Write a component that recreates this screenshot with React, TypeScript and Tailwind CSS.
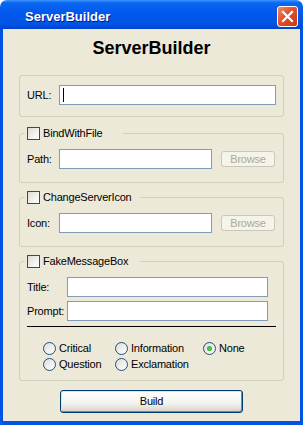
import { ReactNode } from 'react';

function CheckBox() {
  return (
    <span className="w-[13px] h-[13px] shrink-0 border border-[#1c5180] bg-[linear-gradient(135deg,#dcdcd7,#ffffff)]" />
  );
}

function Radio({ label, checked }: { label: string; checked?: boolean }) {
  return (
    <div className="flex items-center h-[13px]">
      <span className="w-[13px] h-[13px] shrink-0 rounded-full border border-[#1c5180] bg-[linear-gradient(135deg,#dcdcd7,#ffffff)] flex items-center justify-center">
        {checked && <span className="w-[5px] h-[5px] rounded-full bg-[radial-gradient(circle,#55d655,#21a121)]" />}
      </span>
      <span className="ml-[3px] leading-[13px]">{label}</span>
    </div>
  );
}

function TextBox({ width, caret }: { width: string; caret?: boolean }) {
  return (
    <div className={`${width} h-[20px] border border-[#7f9db9] bg-white flex items-center`}>
      {caret && <span className="ml-[3px] w-px h-[14px] bg-black" />}
    </div>
  );
}

function BrowseButton() {
  return (
    <div className="ml-[9px] w-[54px] h-[16px] rounded-[3px] border border-[#c9c7ba] bg-[#f5f4ea] text-[#aca899] flex items-center justify-center leading-none">
      Browse
    </div>
  );
}

function Group({ title, legendWidth, children }: { title: string; legendWidth: string; children: ReactNode }) {
  return (
    <fieldset className="mx-4 border border-[#d0d0bf] rounded-[3px] pt-[9px] pb-[13px]">
      <legend className={`ml-[5px] pl-[2px] ${legendWidth} h-[13px] flex items-center`}>
        <CheckBox />
        <span className="ml-[3px] leading-[13px]">{title}</span>
      </legend>
      {children}
    </fieldset>
  );
}

export default function App() {
  return (
    <div className="w-[303px] h-[425px] flex flex-col font-['Liberation_Sans',Arial,sans-serif] text-[11px] tracking-[-0.2px] text-black bg-white">
      {/* Title bar */}
      <div className="h-[29px] shrink-0 rounded-t-[7px] bg-[linear-gradient(to_bottom,#3d95ff_0%,#0a66f0_10%,#0058ee_45%,#0054e3_85%,#0042cf_100%)] flex items-center pt-[3px] pl-[25px] pr-[5px]">
        <span className="flex-1 text-white font-bold text-[13px] leading-[15px] tracking-normal [text-shadow:1px_1px_0_#0a1883]">ServerBuilder</span>
        <div className="w-[21px] h-[21px] rounded-[3px] border border-white bg-[linear-gradient(135deg,#f08a6a,#e0502c_45%,#c73a12)] flex items-center justify-center">
          <svg width="19" height="19" viewBox="0 0 19 19">
            <path d="M5 5 L14 14 M14 5 L5 14" stroke="#ffffff" strokeWidth="2.2" strokeLinecap="square" />
          </svg>
        </div>
      </div>

      {/* Client area */}
      <div className="flex-1 flex flex-col bg-[#ece9d8] border-x-[3px] border-b-[4px] border-[#0054e3]">
        <h1 className="pt-[9px] text-center font-bold text-[18px] leading-[20px] tracking-normal">ServerBuilder</h1>

        {/* URL */}
        <div className="mx-4 mt-[17px] border border-[#d0d0bf] rounded-[3px] pt-[9px] pb-[11px]">
          <div className="flex items-center pl-[7px]">
            <span className="w-[32px]">URL:</span>
            <TextBox width="w-[217px]" caret />
          </div>
        </div>

        <div className="mt-[10px]">
          <Group title="BindWithFile" legendWidth="w-[98px]">
            <div className="flex items-center pl-[7px]">
              <span className="w-[32px]">Path:</span>
              <TextBox width="w-[153px]" />
              <BrowseButton />
            </div>
          </Group>
        </div>

        <div className="mt-[8px]">
          <Group title="ChangeServerIcon" legendWidth="w-[115px]">
            <div className="flex items-center pl-[7px]">
              <span className="w-[32px]">Icon:</span>
              <TextBox width="w-[153px]" />
              <BrowseButton />
            </div>
          </Group>
        </div>

        <div className="mt-[8px]">
          <fieldset className="mx-4 border border-[#d0d0bf] rounded-[3px] pt-[9px] pb-[9px]">
            <legend className="ml-[5px] pl-[2px] w-[115px] h-[13px] flex items-center">
              <CheckBox />
              <span className="ml-[3px] leading-[13px]">FakeMessageBox</span>
            </legend>
            <div className="flex items-center pl-[7px]">
              <span className="w-[40px]">Title:</span>
              <TextBox width="w-[201px]" />
            </div>
            <div className="flex items-center pl-[7px] mt-[4px]">
              <span className="w-[40px]">Prompt:</span>
              <TextBox width="w-[201px]" />
            </div>
            <div className="mx-[7px] mt-[5px] h-px bg-black" />
            <div className="mt-[15px] pl-[23px] grid grid-cols-[72px_88px_auto] gap-y-[3px]">
              <Radio label="Critical" />
              <Radio label="Information" />
              <Radio label="None" checked />
              <Radio label="Question" />
              <Radio label="Exclamation" />
            </div>
          </fieldset>
        </div>

        <button className="mt-[9px] mx-auto w-[183px] h-[23px] rounded-[3px] border border-[#003c74] bg-[linear-gradient(to_bottom,#ffffff,#f3f3ee_60%,#d6d0c5)] shadow-[inset_-1px_-1px_0_#6982ee,inset_1px_1px_0_#cee7ff] text-[11px] leading-none">
          Build
        </button>
      </div>
    </div>
  );
}
